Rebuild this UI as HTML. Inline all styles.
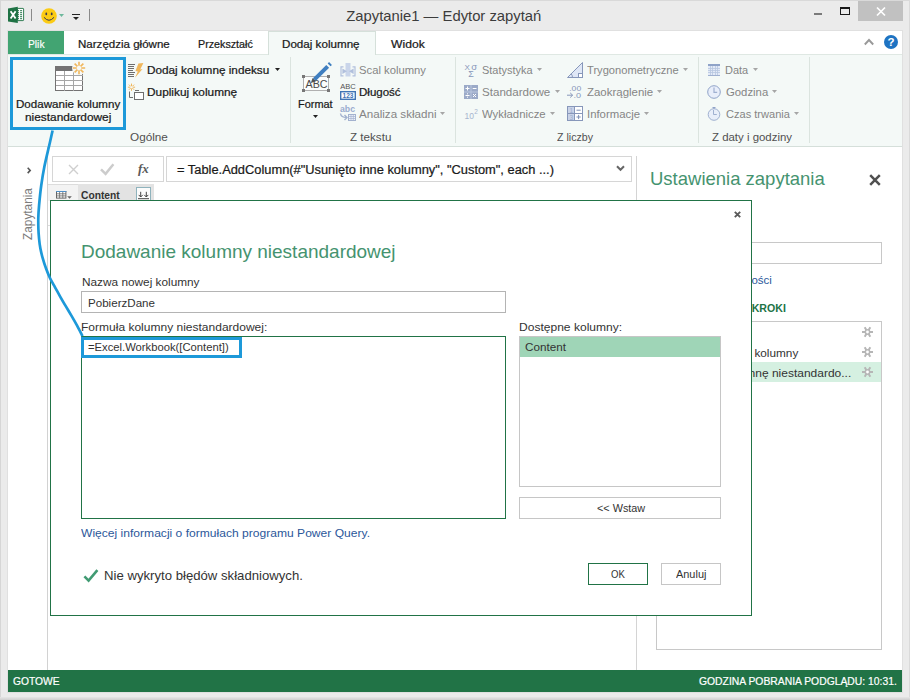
<!DOCTYPE html>
<html><head><meta charset="utf-8">
<style>
*{box-sizing:border-box;margin:0;padding:0}
html,body{width:910px;height:700px;overflow:hidden;background:#ebebeb;font-family:"Liberation Sans",sans-serif;font-size:12px;color:#222}
#win{position:absolute;left:0;top:0;width:910px;height:700px;background:#ebebeb;overflow:hidden}
.t{position:absolute;white-space:nowrap;line-height:1;display:block;transform-origin:0 0}
.b{position:absolute}
svg{position:absolute;overflow:visible}
#tabs{left:8px;top:31px;width:894px;height:23px;background:#fff}
#ribbon{left:8px;top:54px;width:894px;height:93px;background:#f4f9f7;border-top:1px solid #dfe8e3;border-bottom:1px solid #d5dfda}
.sep{position:absolute;top:57px;width:1px;height:86px;background:#dbe4df}
#main{left:8px;top:147px;width:894px;height:523px;background:#fff}
#status{left:8px;top:670px;width:894px;height:22px;background:#217346}
.ad{position:absolute;width:0;height:0;border-left:2.5px solid transparent;border-right:2.5px solid transparent;border-top:3px solid #a6a6a6}
.ad.k{border-top-color:#222}
#dlg{position:absolute;left:0;top:0;width:910px;height:700px}
</style></head><body>
<div id="win">
<!-- window chrome edges -->
<div class="b" style="left:0;top:0;width:910px;height:1px;background:#d9d9d9"></div>
<div class="b" style="left:0;top:0;width:1px;height:700px;background:#d6d6d6"></div>
<div class="b" style="left:909px;top:0;width:1px;height:700px;background:#dadada"></div>
<div class="b" style="left:7px;top:30px;width:896px;height:663px;background:#e0e0e0"></div>
<div class="b" style="left:0;top:697px;width:910px;height:3px;background:linear-gradient(#e6e6e6,#cfcfcf)"></div>

<!-- caption buttons -->
<div class="b" style="left:858px;top:1px;width:45px;height:20px;background:#c1c1c1"></div>
<svg style="left:876px;top:7px" width="10" height="9" viewBox="0 0 10 9"><path d="M1,0.5 L9,8.5 M9,0.5 L1,8.5" stroke="#fff" stroke-width="1.7" fill="none"/></svg>
<div class="b" style="left:840px;top:7px;width:10px;height:8px;border:1px solid #1a1a1a;border-top-width:2px"></div>
<div class="b" style="left:814px;top:13px;width:8px;height:2px;background:#7a7a7a"></div>

<!-- QAT -->
<svg style="left:7px;top:6px" width="18" height="18" viewBox="0 0 18 18">
 <rect x="10.4" y="2.4" width="6.2" height="12.2" rx="0.6" fill="#fff" stroke="#1f7244" stroke-width="0.9"/>
 <path d="M13.1,4.7 H15.1 M13.1,6.7 H15.1 M13.1,8.7 H15.1 M13.1,10.7 H15.1 M13.1,12.7 H15.1 M10.8,4.7 H12 M10.8,6.7 H12 M10.8,8.7 H12 M10.8,10.7 H12 M10.8,12.7 H12" stroke="#1f7244" stroke-width="1"/>
 <polygon points="1,2.4 10.8,0.7 10.8,17 1,15.4" fill="#1f7244"/>
 <path d="M3.6,5.2 L8.6,12.6 M8.6,5.2 L3.6,12.6" stroke="#fff" stroke-width="1.8"/>
</svg>
<div class="b" style="left:31px;top:9px;width:1px;height:12px;background:#8a8a8a"></div>
<svg style="left:41px;top:8px" width="16" height="16" viewBox="0 0 16 16">
 <circle cx="8" cy="8" r="7.8" fill="#fbcb14"/>
 <ellipse cx="5.3" cy="5.9" rx="0.9" ry="1.4" fill="#3b3950"/>
 <ellipse cx="10.7" cy="5.9" rx="0.9" ry="1.4" fill="#3b3950"/>
 <path d="M3.2,9.6 Q8,15.2 12.8,9.6" stroke="#3b3950" stroke-width="1" fill="none" stroke-linecap="round"/>
</svg>
<svg style="left:59px;top:14.0px" width="5" height="3" viewBox="0 0 5 3"><polygon points="0,0 5,0 2.5,3" fill="#6db89c"/></svg>
<div class="b" style="left:72px;top:14px;width:8px;height:1px;background:#222"></div>
<div class="ad" style="left:72.5px;top:17px;border-left-width:3.5px;border-right-width:3.5px;border-top-width:3.5px;border-top-color:#222"></div>
<div class="b" style="left:89px;top:9px;width:1px;height:12px;background:#8a8a8a"></div>

<!-- tabs -->
<div class="b" id="tabs"></div>
<div class="b" style="left:8px;top:31px;width:56px;height:23px;background:#42a472"></div>
<div class="b" id="ribbon"></div>
<div class="b" style="left:268px;top:31px;width:108px;height:24px;background:#f4f9f7;border:1px solid #d5e0da;border-bottom:none"></div>
<!-- collapse chevron + help -->
<svg style="left:864px;top:38px" width="10" height="8" viewBox="0 0 10 8"><path d="M0.8,6.5 L5,2 L9.2,6.5" stroke="#999" stroke-width="1.9" fill="none"/></svg>
<svg style="left:884px;top:35px" width="14" height="14" viewBox="0 0 14 14"><circle cx="7" cy="7" r="7" fill="#1e73c2"/><text x="7" y="11.2" font-family="Liberation Sans" font-weight="bold" font-size="11.5" fill="#fff" text-anchor="middle">?</text></svg>

<!-- ribbon separators -->
<div class="sep" style="left:290px"></div>
<div class="sep" style="left:455px"></div>
<div class="sep" style="left:698px"></div>
<div class="sep" style="left:809px"></div>


<!-- big table icon -->
<svg style="left:0;top:0" width="910" height="150" viewBox="0 0 910 150">
 <rect x="55.5" y="66.5" width="27" height="24" fill="#fff" stroke="#737373"/>
 <rect x="55" y="66" width="28" height="5" fill="#737373"/>
 <path d="M56,75.5 H83 M56,80.5 H83 M56,85.5 H83 M64.5,71 V91 M73.5,71 V91" stroke="#a6a6a6" stroke-width="1"/>
 <circle cx="79" cy="68" r="7" fill="#f6f9f7"/>
 <path d="M81.20,68.00 L85.20,68.00 M80.56,69.56 L83.38,72.38 M79.00,70.20 L79.00,74.20 M77.44,69.56 L74.62,72.38 M76.80,68.00 L72.80,68.00 M77.44,66.44 L74.62,63.62 M79.00,65.80 L79.00,61.80 M80.56,66.44 L83.38,63.62 " stroke="#f0b75c" stroke-width="1.6" fill="none"/>
 <!-- index column icon -->
 <path d="M128,64.5 H135 M128,66.5 H134 M128,68.5 H134 M128,70.5 H133 M128,72.5 H135 M128,74.5 H134 M128,76.5 H134" stroke="#6e6e6e" stroke-width="1"/>
 <polygon points="138.4,63.6 143.4,63 140.2,69.4 142.5,69.1 135,77.8 137.8,71.6 135.5,70.9" fill="#f0b75c"/>
 <!-- duplicate icon -->
 <path d="M132.70,87.20 L135.10,87.20 M132.35,88.05 L134.05,89.75 M131.50,88.40 L131.50,90.80 M130.65,88.05 L128.95,89.75 M130.30,87.20 L127.90,87.20 M130.65,86.35 L128.95,84.65 M131.50,86.00 L131.50,83.60 M132.35,86.35 L134.05,84.65 " stroke="#f0b75c" stroke-width="1" fill="none"/>
 <path d="M129.5,91.5 V97.5 H133" stroke="#6e6e6e" stroke-width="1" fill="none"/>
 <path d="M135,90.5 H139" stroke="#6e6e6e" stroke-width="1"/>
 <rect x="134.5" y="92.5" width="9" height="7" fill="#fff" stroke="#6e6e6e"/>
 <!-- format icon -->
 <rect x="303.5" y="76.5" width="25" height="14" fill="#fbfdfc" stroke="#b0b0b0"/>
 <rect x="302" y="75" width="3" height="3" fill="#777"/><rect x="327" y="75" width="3" height="3" fill="#777"/>
 <rect x="302" y="89" width="3" height="3" fill="#777"/><rect x="327" y="89" width="3" height="3" fill="#777"/>
 <text x="316.5" y="87.6" font-family="Liberation Sans" font-size="11" fill="#4a4a4a" text-anchor="middle" textLength="22" lengthAdjust="spacingAndGlyphs">ABC</text>
 <path d="M314.3,79.7 L327.7,66.3" stroke="#3f7fc0" stroke-width="4"/>
 <path d="M329.1,64.9 L330.5,63.5" stroke="#3f7fc0" stroke-width="4"/>
 <polygon points="310.8,83 312.6,77.9 316,81.3" fill="#555"/>
 <!-- merge columns icon (disabled) -->
 <rect x="345.5" y="63" width="5" height="13.5" fill="#c9d5ea"/>
 <path d="M343.5,66.8 H341 V75.8 H343.5 M352.5,66.8 H355 V75.8 H352.5" stroke="#b1c0dd" stroke-width="1.2" fill="none"/>
 <polygon points="342.4,68.4 347,71.2 342.4,74" fill="#b1c0dd"/><polygon points="353.6,68.4 349,71.2 353.6,74" fill="#b1c0dd"/>
 <!-- ABC 123 icon -->
 <text x="348" y="89.4" font-family="Liberation Sans" font-size="7.3" fill="#555" text-anchor="middle" textLength="15.5" lengthAdjust="spacingAndGlyphs">ABC</text>
 <rect x="340.7" y="91.7" width="14.6" height="7.6" fill="#fff" stroke="#3f74b5" stroke-width="1.4"/>
 <text x="348" y="98.3" font-family="Liberation Sans" font-weight="bold" font-size="6.5" fill="#3f74b5" text-anchor="middle" textLength="11" lengthAdjust="spacingAndGlyphs">123</text>
 <!-- parse icon (disabled) -->
 <text x="347.5" y="112.3" font-family="Liberation Sans" font-weight="bold" font-size="8.5" fill="#9aacd0" text-anchor="middle" textLength="15" lengthAdjust="spacingAndGlyphs">abc</text>
 <path d="M340.5,113.5 C341,117 343,117.5 346.5,117.5 M344.5,115 L347,117.5 L344.5,120" stroke="#a3b2cf" stroke-width="1.4" fill="none"/>
 <rect x="348.5" y="114.5" width="7" height="6" fill="#eef2fa" stroke="#a3b2cf"/>
 <path d="M348.5,116.5 H355.5 M348.5,118.5 H355.5 M351,114.5 V120.5 M353.3,114.5 V120.5" stroke="#a3b2cf" stroke-width="0.7"/>
 <!-- statistics -->
 <text x="464.6" y="69.7" font-family="Liberation Sans" font-size="8" fill="#8797ba">X</text>
 <text x="471.3" y="69.7" font-family="Liberation Sans" font-size="9.5" fill="#8797ba">σ</text>
 <text x="468.3" y="77.2" font-family="Liberation Sans" font-size="9" fill="#8797ba">Σ</text>
 <!-- standard -->
 <rect x="464" y="85" width="14" height="14" fill="#9baac8"/>
 <path d="M464,92 H478 M471,85 V99" stroke="#b9c6de" stroke-width="1"/>
 <path d="M465.5,88.5 H469.5 M467.5,86.5 V90.5 M472.7,88.5 H476.5 M465.5,95.5 H469.5 M473,94 L476,97 M476,94 L473,97" stroke="#fff" stroke-width="1"/>
 <rect x="467" y="93.3" width="1" height="1" fill="#fff"/><rect x="467" y="96.7" width="1" height="1" fill="#fff"/>
 <!-- exponent -->
 <text x="464.5" y="118.7" font-family="Liberation Sans" font-size="9" fill="#a7b5cf" textLength="9.5" lengthAdjust="spacingAndGlyphs">10</text>
 <text x="474.2" y="114" font-family="Liberation Sans" font-size="6.5" fill="#a7b5cf">2</text>
 <!-- trig -->
 <polygon points="567.5,77.5 582.5,77.5 582.5,62.5" fill="#dfe7f6" stroke="#8797ba" stroke-width="1"/>
 <rect x="578.5" y="73.5" width="4" height="4" fill="#fff" stroke="#8797ba" stroke-width="1"/>
 <path d="M571.2,73.8 Q572.6,75.4 572.4,77.5" stroke="#8797ba" stroke-width="1" fill="none"/>
 <!-- rounding -->
 <text x="569.2" y="91" font-family="Liberation Sans" font-size="7.8" fill="#8797ba" textLength="12" lengthAdjust="spacingAndGlyphs">.00</text>
 <text x="573.6" y="97.7" font-family="Liberation Sans" font-size="7.8" fill="#8797ba" textLength="7.6" lengthAdjust="spacingAndGlyphs">.0</text>
 <path d="M567,95.2 H572.6 M570.2,92.9 L572.6,95.2 L570.2,97.5" stroke="#8797ba" stroke-width="1" fill="none"/>
 <!-- information -->
 <rect x="567.5" y="106.5" width="15" height="14" fill="#fff" stroke="#8797ba"/>
 <rect x="568" y="107" width="6.5" height="13" fill="#c9d3e8"/>
 <path d="M574.5,106.5 V120.5 M567.5,113.5 H582.5" stroke="#8797ba" stroke-width="1"/>
 <path d="M576.5,110.2 H580.7 M576.5,117 H580.7 M578.6,114.9 V119.1" stroke="#7f90b5" stroke-width="1"/>
 <text x="569.6" y="112.8" font-family="Liberation Sans" font-size="6.5" fill="#9dadcc">1</text>
 <text x="569.6" y="119.7" font-family="Liberation Sans" font-size="6.5" fill="#9dadcc">3</text>
 <!-- date -->
 <rect x="708" y="64" width="12" height="12" fill="#e3eaf7"/>
 <rect x="708" y="64" width="12" height="2" fill="#8fa3c8"/>
 <rect x="708" y="75" width="12" height="1" fill="#9fb0d0"/>
 <path d="M708,68.5 H720 M708,70.5 H720 M708,72.5 H720 M710.5,66 V75 M712.5,66 V75 M715.5,66 V75 M717.5,66 V75" stroke="#b8c6e0" stroke-width="0.8"/>
 <!-- time -->
 <circle cx="714" cy="92" r="6.3" fill="#e8eefa" stroke="#8fa3c8" stroke-width="1"/>
 <path d="M714,87.5 V92.3 H717.2" stroke="#9fb0d0" stroke-width="1.2" fill="none"/>
 <!-- duration -->
 <circle cx="714" cy="114.5" r="5.8" fill="#e8eefa" stroke="#9fb0d0" stroke-width="1"/>
 <polygon points="712,107 716,107 714,109" fill="#8fa3c8"/>
 <path d="M713.5,110 V114.5 H716.8" stroke="#9fb0d0" stroke-width="1" fill="none"/>
</svg>


<!-- dropdown arrows -->
<svg style="left:275.0px;top:68.0px" width="5" height="3" viewBox="0 0 5 3"><polygon points="0,0 5,0 2.5,3" fill="#222"/></svg>
<svg style="left:313.0px;top:115.0px" width="5" height="3" viewBox="0 0 5 3"><polygon points="0,0 5,0 2.5,3" fill="#222"/></svg>
<svg style="left:440.0px;top:112.0px" width="5" height="3" viewBox="0 0 5 3"><polygon points="0,0 5,0 2.5,3" fill="#a6a6a6"/></svg>
<svg style="left:537.0px;top:68.0px" width="5" height="3" viewBox="0 0 5 3"><polygon points="0,0 5,0 2.5,3" fill="#a6a6a6"/></svg>
<svg style="left:555.0px;top:90.0px" width="5" height="3" viewBox="0 0 5 3"><polygon points="0,0 5,0 2.5,3" fill="#a6a6a6"/></svg>
<svg style="left:550.0px;top:112.0px" width="5" height="3" viewBox="0 0 5 3"><polygon points="0,0 5,0 2.5,3" fill="#a6a6a6"/></svg>
<svg style="left:683.0px;top:68.0px" width="5" height="3" viewBox="0 0 5 3"><polygon points="0,0 5,0 2.5,3" fill="#a6a6a6"/></svg>
<svg style="left:657.0px;top:90.0px" width="5" height="3" viewBox="0 0 5 3"><polygon points="0,0 5,0 2.5,3" fill="#a6a6a6"/></svg>
<svg style="left:644.0px;top:112.0px" width="5" height="3" viewBox="0 0 5 3"><polygon points="0,0 5,0 2.5,3" fill="#a6a6a6"/></svg>
<svg style="left:753.0px;top:68.0px" width="5" height="3" viewBox="0 0 5 3"><polygon points="0,0 5,0 2.5,3" fill="#a6a6a6"/></svg>
<svg style="left:772.0px;top:90.0px" width="5" height="3" viewBox="0 0 5 3"><polygon points="0,0 5,0 2.5,3" fill="#a6a6a6"/></svg>
<svg style="left:794.0px;top:112.0px" width="5" height="3" viewBox="0 0 5 3"><polygon points="0,0 5,0 2.5,3" fill="#a6a6a6"/></svg>

<!-- main -->
<div class="b" id="main"></div>
<svg width="0" height="0" style="left:0;top:0"><defs><g id="gear"><path d="M0,5 H11 M2.7,0.2 L8.3,9.8 M8.3,0.2 L2.7,9.8" stroke="#b6b6b6" stroke-width="2"/><circle cx="5.5" cy="5" r="2.9" fill="#b6b6b6"/><circle cx="5.5" cy="5" r="1.4" fill="#fff"/></g></defs></svg>

<!-- left pane -->
<div class="b" style="left:47px;top:147px;width:1px;height:523px;background:#d2d2d2"></div>
<div class="b" style="left:48px;top:184px;width:106px;height:1px;background:#dcdcdc"></div>
<div class="b" style="left:48px;top:225px;width:3px;height:1px;background:#dcdcdc"></div>
<svg style="left:27px;top:167.3px" width="5" height="7" viewBox="0 0 5 7"><path d="M0.7,0.7 L3.2,3.4 L0.7,6.1" stroke="#555" stroke-width="1.6" fill="none"/></svg>
<div class="t" style="left:21px;top:239.5px;font-size:13px;color:#7c7c7c;transform:rotate(-90deg) scaleX(0.91);transform-origin:0 0;">Zapytania</div>
<!-- formula bar -->
<div class="b" style="left:52px;top:156px;width:112px;height:26px;border:1px solid #d6d6d6;background:#fff"></div>
<svg style="left:68px;top:164px" width="11" height="11" viewBox="0 0 11 11"><path d="M1,1 L10,10 M10,1 L1,10" stroke="#cfcfcf" stroke-width="1.4" fill="none"/></svg>
<svg style="left:100px;top:163px" width="14" height="12" viewBox="0 0 14 12"><path d="M1,6.3 L5.6,10.8 L13.4,1.2" stroke="#cccccc" stroke-width="2.5" fill="none"/></svg>
<div class="t" style="left:138px;top:162px;font-family:'Liberation Serif',serif;font-style:italic;font-weight:bold;font-size:13px;color:#5a5a5a;letter-spacing:0px">fx</div>
<div class="b" style="left:166px;top:156px;width:466px;height:26px;border:1px solid #d6d6d6;background:#fff"></div>
<svg style="left:616px;top:165px" width="9" height="7" viewBox="0 0 9 7"><path d="M1,1.2 L4.5,4.8 L8,1.2" stroke="#666" stroke-width="2" fill="none"/></svg>
<div class="b" style="left:636px;top:156px;width:1px;height:514px;background:#d4d4d4"></div>
<!-- grid header -->
<div class="b" style="left:48px;top:185px;width:30px;height:16px;background:#f3f3f3"></div>
<div class="b" style="left:78px;top:184px;width:76px;height:17px;background:#e3e3e3"></div>
<svg style="left:56px;top:191px" width="18" height="9" viewBox="0 0 18 9"><rect x="0.5" y="0.5" width="9.4" height="6.6" fill="#fff" stroke="#666" stroke-width="1"/><path d="M0.5,2.8 H9.9 M0.5,4.9 H9.9 M3.6,0.5 V7.1 M6.8,0.5 V7.1" stroke="#666" stroke-width="0.8"/><path d="M0,0.5 H10.4" stroke="#4f8fc7" stroke-width="1"/><polygon points="11.2,5.2 15.8,5.2 13.5,7.7" fill="#666"/></svg>
<div class="b" style="left:136px;top:187px;width:15px;height:14px;border:1px solid #8fb3bd;background:#fbfbfb"></div>
<svg style="left:138px;top:190.5px" width="11" height="9" viewBox="0 0 11 9"><path d="M0,7.7 H11" stroke="#444" stroke-width="1"/><path d="M2.7,0.8 V6 M0.7,3.9 L2.7,6 L4.7,3.9 M8.3,0.8 V6 M6.3,3.9 L8.3,6 L10.3,3.9" stroke="#444" stroke-width="1" fill="none"/></svg>
<!-- right pane -->
<svg style="left:869px;top:174px" width="12" height="12" viewBox="0 0 12 12"><path d="M1.2,1.2 L10.8,10.8 M10.8,1.2 L1.2,10.8" stroke="#505050" stroke-width="2.5" fill="none"/></svg>
<div class="b" style="left:656px;top:242px;width:226px;height:22px;border:1px solid #c8c8c8;background:#fff"></div>
<div class="b" style="left:656px;top:321px;width:226px;height:329px;border:1px solid #c8c8c8;background:#fff"></div>
<div class="b" style="left:657px;top:362px;width:224px;height:20px;background:#d5f0e1"></div>
<svg style="left:862px;top:327px" width="11" height="10" viewBox="0 0 11 10"><use href="#gear"/></svg>
<svg style="left:862px;top:347px" width="11" height="10" viewBox="0 0 11 10"><use href="#gear"/></svg>
<svg style="left:862px;top:367px" width="11" height="10" viewBox="0 0 11 10"><use href="#gear"/></svg>

<div class="b" id="status"></div>
<span class="t" style="left:346.30px;top:8.60px;font-size:14.8px;transform:scaleX(1.0000);color:#3c3c3c">Zapytanie1 — Edytor zapytań</span>
<span class="t" style="left:27.80px;top:38.62px;font-size:10.75px;transform:scaleX(0.9528);color:#fff;-webkit-text-stroke:0.15px #fff">Plik</span>
<span class="t" style="left:78.20px;top:38.62px;font-size:10.75px;transform:scaleX(1.0741);color:#1a1a1a;-webkit-text-stroke:0.22px #1a1a1a">Narzędzia główne</span>
<span class="t" style="left:198.00px;top:38.62px;font-size:10.75px;transform:scaleX(0.9967);color:#1a1a1a;-webkit-text-stroke:0.22px #1a1a1a">Przekształć</span>
<span class="t" style="left:282.40px;top:38.62px;font-size:10.75px;transform:scaleX(1.0819);color:#1a1a1a;-webkit-text-stroke:0.22px #1a1a1a">Dodaj kolumnę</span>
<span class="t" style="left:390.80px;top:38.62px;font-size:10.75px;transform:scaleX(1.1282);color:#1a1a1a;-webkit-text-stroke:0.22px #1a1a1a">Widok</span>
<span class="t" style="left:16.40px;top:99.12px;font-size:10.75px;transform:scaleX(1.0767);color:#1a1a1a;-webkit-text-stroke:0.22px #1a1a1a">Dodawanie kolumny</span>
<span class="t" style="left:25.30px;top:111.62px;font-size:10.75px;transform:scaleX(1.1027);color:#1a1a1a;-webkit-text-stroke:0.22px #1a1a1a">niestandardowej</span>
<span class="t" style="left:147.30px;top:64.62px;font-size:10.75px;transform:scaleX(1.0942);color:#1a1a1a;-webkit-text-stroke:0.22px #1a1a1a">Dodaj kolumnę indeksu</span>
<span class="t" style="left:147.30px;top:86.62px;font-size:10.75px;transform:scaleX(1.1016);color:#1a1a1a;-webkit-text-stroke:0.22px #1a1a1a">Duplikuj kolumnę</span>
<span class="t" style="left:129.60px;top:131.62px;font-size:10.75px;transform:scaleX(1.0927);color:#505050">Ogólne</span>
<span class="t" style="left:297.70px;top:98.62px;font-size:10.75px;transform:scaleX(1.0159);color:#1a1a1a;-webkit-text-stroke:0.22px #1a1a1a">Format</span>
<span class="t" style="left:358.90px;top:64.62px;font-size:10.75px;transform:scaleX(1.0472);color:#858585">Scal kolumny</span>
<span class="t" style="left:358.90px;top:86.62px;font-size:10.75px;transform:scaleX(1.0719);color:#1a1a1a;-webkit-text-stroke:0.22px #1a1a1a">Długość</span>
<span class="t" style="left:358.90px;top:108.62px;font-size:10.75px;transform:scaleX(1.0811);color:#858585">Analiza składni</span>
<span class="t" style="left:350.20px;top:131.62px;font-size:10.75px;transform:scaleX(1.0822);color:#505050">Z tekstu</span>
<span class="t" style="left:482.30px;top:64.62px;font-size:10.75px;transform:scaleX(1.0200);color:#858585">Statystyka</span>
<span class="t" style="left:482.30px;top:86.62px;font-size:10.75px;transform:scaleX(1.0778);color:#858585">Standardowe</span>
<span class="t" style="left:482.30px;top:108.62px;font-size:10.75px;transform:scaleX(1.0570);color:#858585">Wykładnicze</span>
<span class="t" style="left:586.50px;top:64.62px;font-size:10.75px;transform:scaleX(1.0345);color:#858585">Trygonometryczne</span>
<span class="t" style="left:586.50px;top:86.62px;font-size:10.75px;transform:scaleX(1.0648);color:#858585">Zaokrąglenie</span>
<span class="t" style="left:586.50px;top:108.62px;font-size:10.75px;transform:scaleX(1.0556);color:#858585">Informacje</span>
<span class="t" style="left:557.40px;top:131.62px;font-size:10.75px;transform:scaleX(0.9876);color:#505050">Z liczby</span>
<span class="t" style="left:725.00px;top:64.62px;font-size:10.75px;transform:scaleX(1.0207);color:#858585">Data</span>
<span class="t" style="left:725.50px;top:86.62px;font-size:10.75px;transform:scaleX(1.0534);color:#858585">Godzina</span>
<span class="t" style="left:725.50px;top:108.62px;font-size:10.75px;transform:scaleX(1.0281);color:#858585">Czas trwania</span>
<span class="t" style="left:712.30px;top:131.62px;font-size:10.75px;transform:scaleX(1.0631);color:#505050">Z daty i godziny</span>
<span class="t" style="left:176.60px;top:163.75px;font-size:12.5px;transform:scaleX(1.0280);color:#1a1a1a;-webkit-text-stroke:0.22px #1a1a1a">= Table.AddColumn(#&quot;Usunięto inne kolumny&quot;, &quot;Custom&quot;, each ...)</span>
<span class="t" style="left:80.90px;top:189.62px;font-size:10.75px;transform:scaleX(0.9532);color:#333;font-weight:bold">Content</span>
<span class="t" style="left:650.21px;top:170.20px;font-size:18.6px;transform:scaleX(0.9945);color:#45936f">Ustawienia zapytania</span>
<span class="t" style="left:657.41px;top:274.93px;font-size:10.75px;transform:scaleX(1.0679);color:#2b579a">Wszystkie właściwości</span>
<span class="t" style="left:666.49px;top:301.95px;font-size:11.7px;transform:scaleX(0.9061);color:#217346;font-weight:bold">ZASTOSOWANE KROKI</span>
<span class="t" style="left:678.60px;top:347.62px;font-size:10.75px;transform:scaleX(1.0971);color:#333">Usunięto inne kolumny</span>
<span class="t" style="left:678.24px;top:367.62px;font-size:10.75px;transform:scaleX(1.1150);color:#333">Dodano kolumnę niestandardo...</span>
<span class="t" style="left:12.70px;top:675.92px;font-size:10.75px;transform:scaleX(0.9526);color:#fff;-webkit-text-stroke:0.2px #fff">GOTOWE</span>
<span class="t" style="left:699.20px;top:675.92px;font-size:10.75px;transform:scaleX(0.9625);color:#fff;-webkit-text-stroke:0.2px #fff">GODZINA POBRANIA PODGLĄDU: 10:31.</span>
<div id="dlg">

<div class="b" style="left:50px;top:200px;width:702px;height:416px;border:1px solid #217346;background:#fff"></div>
<svg style="left:734px;top:211px" width="7" height="7" viewBox="0 0 7 7"><path d="M0.8,0.8 L6.2,6.2 M6.2,0.8 L0.8,6.2" stroke="#5a5a5a" stroke-width="1.9" fill="none"/></svg>
<div class="b" style="left:81px;top:291px;width:425px;height:22px;border:1px solid #b4b4b4;background:#fff"></div>
<div class="b" style="left:81px;top:336px;width:425px;height:183px;border:1px solid #217346;background:#fff"></div>
<div class="b" style="left:519px;top:336px;width:202px;height:151px;border:1px solid #c6c6c6;background:#fff"></div>
<div class="b" style="left:520px;top:337px;width:200px;height:20px;background:#9fd5b7"></div>
<div class="b" style="left:519px;top:497px;width:202px;height:22px;border:1px solid #c6c6c6;background:#fff"></div>
<div class="b" style="left:588px;top:563px;width:60px;height:22px;border:1px solid #217346;background:#fff"></div>
<div class="b" style="left:661px;top:563px;width:60px;height:22px;border:1px solid #c6c6c6;background:#fff"></div>
<svg style="left:83px;top:569px" width="17" height="14" viewBox="0 0 17 14"><path d="M1.4,7.4 L5.6,11.6 L14.4,1.2" stroke="#419b73" stroke-width="2.6" fill="none"/></svg>

<span class="t" style="left:80.68px;top:243.40px;font-size:18.6px;transform:scaleX(1.0213);color:#45936f">Dodawanie kolumny niestandardowej</span>
<span class="t" style="left:81.50px;top:276.62px;font-size:10.75px;transform:scaleX(1.0988);color:#333">Nazwa nowej kolumny</span>
<span class="t" style="left:87.50px;top:296.95px;font-size:11.7px;transform:scaleX(0.9915);color:#333">PobierzDane</span>
<span class="t" style="left:81.20px;top:321.62px;font-size:10.75px;transform:scaleX(1.1176);color:#333">Formuła kolumny niestandardowej:</span>
<span class="t" style="left:88.20px;top:341.93px;font-size:10.75px;transform:scaleX(1.0459);color:#333">=Excel.Workbook([Content])</span>
<span class="t" style="left:519.20px;top:321.62px;font-size:10.75px;transform:scaleX(1.1205);color:#333">Dostępne kolumny:</span>
<span class="t" style="left:525.30px;top:341.35px;font-size:11.7px;transform:scaleX(1.0003);color:#333">Content</span>
<span class="t" style="left:596.60px;top:502.62px;font-size:10.75px;transform:scaleX(1.0077);color:#333">&lt;&lt; Wstaw</span>
<span class="t" style="left:81.40px;top:527.92px;font-size:10.75px;transform:scaleX(1.1233);color:#2b579a">Więcej informacji o formułach programu Power Query.</span>
<span class="t" style="left:103.66px;top:570.45px;font-size:12.7px;transform:scaleX(1.0369);color:#333">Nie wykryto błędów składniowych.</span>
<span class="t" style="left:610.60px;top:568.83px;font-size:10.75px;transform:scaleX(0.8923);color:#333">OK</span>
<span class="t" style="left:676.20px;top:568.83px;font-size:10.75px;transform:scaleX(1.0171);color:#333">Anuluj</span>
</div>

<div class="b" style="left:10px;top:57px;width:116px;height:73px;border:3px solid #1d99d9"></div>
<div class="b" style="left:81px;top:337px;width:161px;height:21px;border:3px solid #1d99d9"></div>
<svg style="left:0;top:0" width="910" height="700" viewBox="0 0 910 700"><path d="M52.6,130.5 C52.0,133.3 50.2,141.3 48.8,147.3 C47.4,153.3 45.7,160.2 44.4,166.6 C43.1,173.0 42.1,179.4 41.2,185.8 C40.3,192.2 39.6,199.7 39.1,205.1 C38.6,210.5 38.4,214.0 38.3,218 C38.2,222.0 38.3,225.5 38.4,229 C38.5,232.5 38.8,235.7 39.1,239 C39.4,242.3 39.8,245.4 40.4,248.6 C41.0,251.8 41.8,255.0 42.7,258.2 C43.6,261.4 44.6,264.6 45.8,267.8 C47.0,271.0 48.2,274.3 49.7,277.5 C51.2,280.7 53.1,283.9 54.9,287.1 C56.7,290.3 58.5,293.6 60.3,296.8 C62.1,300.0 64.0,303.2 65.9,306.4 C67.8,309.6 69.8,312.9 71.7,316.1 C73.6,319.3 75.3,322.4 77.1,325.7 C78.9,329.0 81.6,334.4 82.5,336.2" stroke="#1d99d9" stroke-width="2.7" fill="none"/></svg>

</div>
</body></html>
